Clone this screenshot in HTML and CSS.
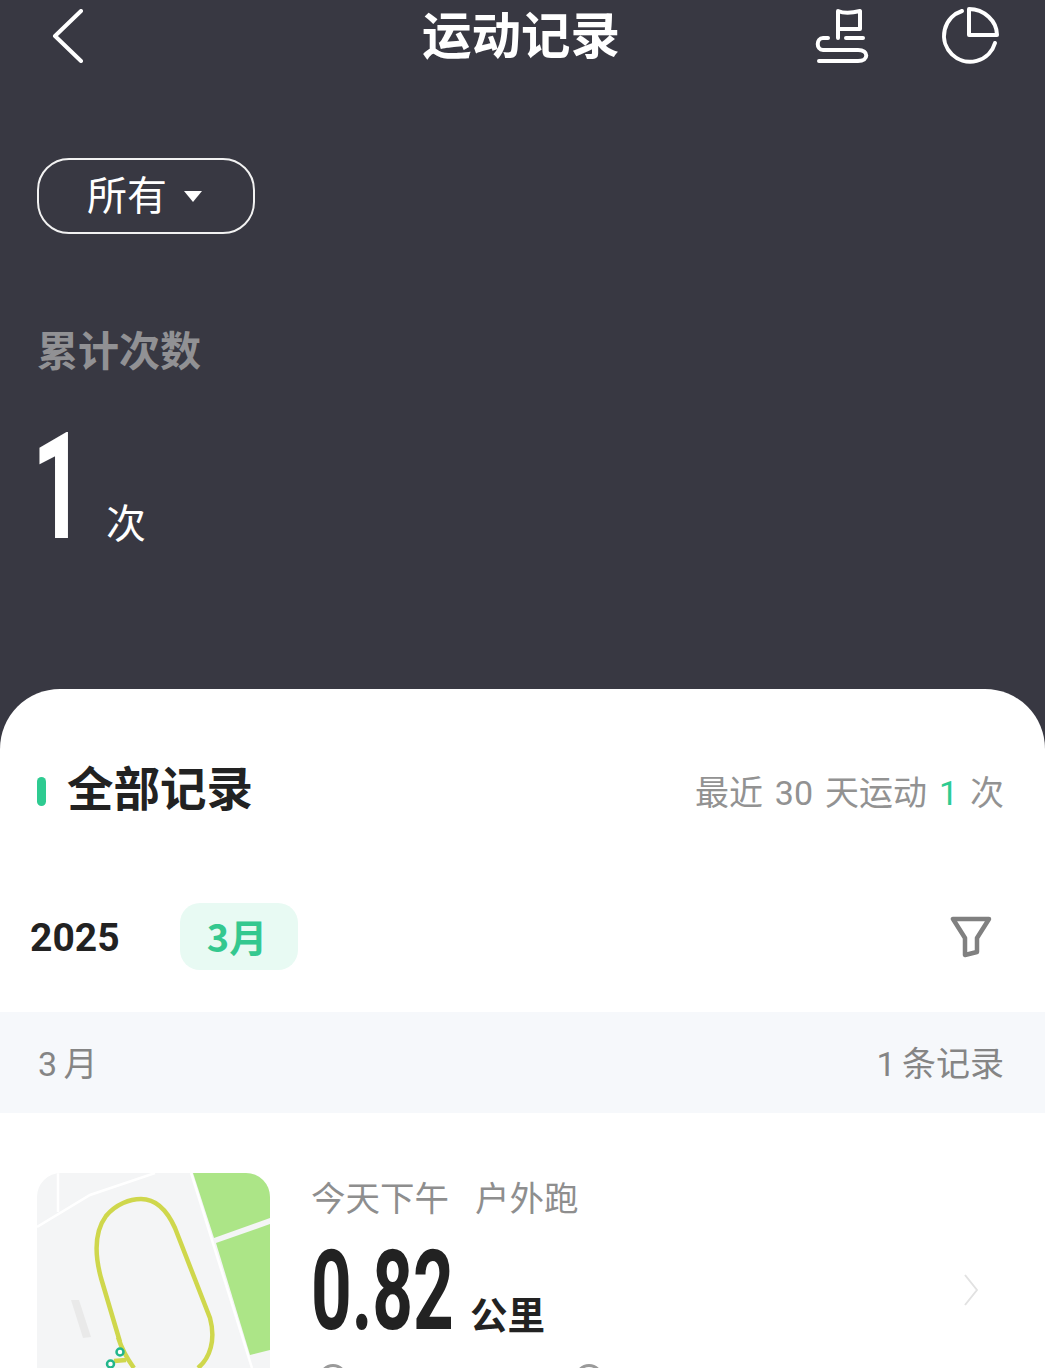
FILE: index.html
```html
<!DOCTYPE html>
<html lang="zh-CN">
<head>
<meta charset="utf-8">
<title>运动记录</title>
<link rel="stylesheet" href="styles.css">
</head>
<body>
<div class="page">
  <header class="hero">
    <nav class="nav">
      <svg class="nav-back" viewBox="0 0 32 54" width="32" height="54"><path d="M29 2 L3 27 L29 52" fill="none" stroke="#fff" stroke-width="4" stroke-linecap="round" stroke-linejoin="round"/></svg>
      <h1 class="nav-title">运动记录</h1>
      <div class="nav-icons">
        <svg class="flag-icon" width="60" height="60" viewBox="0 0 60 60"><g fill="none" stroke="#fff" stroke-width="4" stroke-linecap="round" stroke-linejoin="round"><path d="M26 31 V4 C33 7 40 6 48 4 V22 H26"/><path d="M34 31 H51"/><path d="M16 31 H11 C4 31 4 43 11 43 H46 C57 43 57 54 46 54 H7"/></g></svg>
        <svg width="60" height="60" viewBox="0 0 60 60"><g fill="none" stroke="#fff" stroke-width="4" stroke-linecap="round" stroke-linejoin="round"><path d="M22 6 A26 26 0 1 0 55 38"/><path d="M29 4 C44 4 57 16 57 30 H29 Z"/></g></svg>
      </div>
    </nav>
    <button class="filter">所有<span class="caret"></span></button>
    <div class="total-label">累计次数</div>
    <div class="total">
      <span class="total-num">1</span>
      <span class="total-unit">次</span>
    </div>
  </header>
  <main class="sheet">
    <div class="sheet-head">
      <div class="head-left"><span class="accent"></span><h2 class="head-title">全部记录</h2></div>
      <div class="head-right">最近 30 天运动 <span class="green">1</span> 次</div>
    </div>
    <div class="months">
      <span class="year">2025</span>
      <span class="chip">3月</span>
      <svg class="funnel" width="42" height="42" viewBox="0 0 42 42"><path d="M3 3 H39 L27 22 V36 L15 39 V22 Z" fill="none" stroke="#808080" stroke-width="4.500" stroke-linejoin="round"/></svg>
    </div>
    <div class="band"><span>3 月</span><span>1 条记录</span></div>
    <article class="record">
      <svg class="map" viewBox="37 1173 233 233" width="233" height="233">
        <rect x="37" y="1173" width="233" height="233" fill="#f4f5f6"/>
        <path d="M193 1173 H270 V1218 L214 1238 Z" fill="#ace587"/>
        <path d="M216 1243 L270 1224 V1350 L250 1355 Z" fill="#ace587"/>
        <g fill="none" stroke="#fff" stroke-width="2.500">
          <path d="M37 1227 L90 1195 L155 1173"/>
          <path d="M58 1173 V1212"/>
          <path d="M191 1173 L252 1368"/>
        </g>
        <path d="M71 1300 L79 1300 L91 1337 L83 1338 Z" fill="#e9e9e9"/>
        <path d="M120 1342 L101 1278 C94 1252 95 1231 106 1216 C116 1204 130 1199 141 1199 C155 1199 166 1208 175 1228 L210 1318 C216 1340 210 1358 198 1368 M118 1337 C122 1350 128 1360 134 1368 M114 1361 L126 1360" fill="none" stroke="#cfd74c" stroke-width="4.500" stroke-linejoin="round"/>
        <circle cx="120" cy="1352" r="3.500" fill="#fff" stroke="#22b68c" stroke-width="2.500"/>
        <circle cx="110.500" cy="1364" r="3.500" fill="#fff" stroke="#22b68c" stroke-width="2.500"/>
      </svg>
      <div class="record-body">
        <div class="record-meta"><span>今天下午</span><span>户外跑</span></div>
        <div class="record-dist"><span class="dist-box"><span class="dist-num">0.82</span></span><span class="dist-unit">公里</span></div>
        <div class="record-stats"><span class="stat-dot"></span><span class="stat-dot"></span></div>
      </div>
      <svg class="chevron" width="16" height="34" viewBox="0 0 16 34"><path d="M2 2 L14 17 L2 32" fill="none" stroke="#e2e2e2" stroke-width="2" stroke-linejoin="round"/></svg>
    </article>
  </main>
</div>
</body>
</html>
```

FILE: styles.css
```css
* { box-sizing: border-box; }
html, body { margin: 0; padding: 0; }
body {
  background: #383842;
  font-family: "Noto Sans CJK SC", "Roboto", sans-serif;
}
.page {
  width: 1045px;
  height: 1368px;
  overflow: hidden;
  background: #383842;
}
.hero {
  height: 689px;
  padding: 0 37px;
  color: #fff;
}
.nav {
  height: 72px;
  display: flex;
  align-items: center;
  justify-content: space-between;
  position: relative;
}
.nav-back { margin-left: 15px; }
.nav-title {
  position: absolute;
  left: 385px;
  top: 0;
  margin: 0;
  font-size: 49.500px;
  line-height: 65px;
  font-weight: 700;
  color: #fff;
}
.nav-icons {
  display: flex;
  align-items: center;
  gap: 68px;
  margin-right: 8px;
  margin-bottom: 2px;
}
.flag-icon { margin-top: 4px; }
.filter {
  margin-top: 86px;
  width: 218px;
  height: 76px;
  display: flex;
  align-items: center;
  padding: 0 0 7px 48px;
  border: 2px solid #f2f2f2;
  border-radius: 32px;
  background: transparent;
  color: #fff;
  font-family: inherit;
  font-size: 40px;
  line-height: 1;
}
.caret {
  margin-left: 17px;
  margin-top: 7px;
  width: 0;
  height: 0;
  border-left: 9px solid transparent;
  border-right: 9px solid transparent;
  border-top: 11px solid #fff;
}
.total-label {
  margin-top: 85px;
  font-size: 41px;
  line-height: 58px;
  font-weight: 700;
  color: #919194;
}
.total {
  margin-top: 46px;
  display: flex;
  align-items: flex-end;
  height: 130px;
}
.total-num {
  display: block;
  width: 70px;
  font-family: "Roboto", sans-serif;
  font-size: 148px;
  font-weight: 700;
  line-height: 130px;
  transform: scaleX(0.62);
  transform-origin: left bottom;
  margin-left: -5px;
}
.total-unit {
  font-size: 40px;
  line-height: 50px;
  margin-left: 4px;
  margin-bottom: 7px;
}
.sheet {
  height: 679px;
  background: #fff;
  border-radius: 60px 60px 0 0;
}
.sheet-head {
  display: flex;
  align-items: center;
  justify-content: space-between;
  padding: 68px 41px 0 37px;
  height: 136px;
}
.head-left { display: flex; align-items: center; gap: 21px; }
.accent {
  width: 9px;
  height: 29px;
  border-radius: 5px;
  background: #2ecb91;
}
.head-title {
  margin: 0 0 10px;
  font-size: 46.500px;
  line-height: 64px;
  font-weight: 700;
  color: #222;
}
.head-right {
  margin-top: 4px;
  font-family: "Roboto", "Noto Sans CJK SC", sans-serif;
  font-size: 34px;
  line-height: 48px;
  font-weight: 400;
  word-spacing: 3.500px;
  color: #929292;
}
.green { color: #2ecb91; }
.months {
  display: flex;
  align-items: center;
  height: 67px;
  margin-top: 78px;
  padding: 0 53px 0 30px;
}
.year {
  width: 150px;
  padding-top: 2px;
  font-family: "Roboto", sans-serif;
  font-size: 39px;
  font-weight: 700;
  color: #222;
}
.chip {
  width: 118px;
  height: 67px;
  padding-right: 4px;
  border-radius: 20px;
  background: #e8faf3;
  color: #34c88f;
  font-size: 38px;
  font-weight: 700;
  line-height: 65px;
  text-align: center;
}
.funnel { margin-left: auto; }
.band {
  margin-top: 42px;
  height: 101px;
  padding: 0 41px 2px 38px;
  display: flex;
  align-items: center;
  justify-content: space-between;
  background: #f6f8fb;
  font-family: "Roboto", "Noto Sans CJK SC", sans-serif;
  font-size: 34px;
  font-weight: 400;
  word-spacing: -2px;
  color: #858585;
}
.record {
  display: flex;
  padding: 60px 66px 0 37px;
  position: relative;
}
.map {
  flex: none;
  border-radius: 24px;
}
.record-body {
  margin-left: 41px;
  flex: 1;
}
.record-meta {
  display: flex;
  gap: 26px;
  margin-top: -2px;
  font-size: 34.500px;
  line-height: 50px;
  font-weight: 400;
  color: #8e8e8e;
}
.record-dist {
  display: flex;
  align-items: flex-end;
  height: 100px;
  margin-top: 20px;
}
.dist-box {
  display: block;
  width: 159px;
  height: 100px;
}
.dist-num {
  display: block;
  font-family: "Roboto", sans-serif;
  font-size: 111px;
  font-weight: 700;
  line-height: 100px;
  color: #222;
  transform: scaleX(0.64);
  transform-origin: left center;
  white-space: nowrap;
}
.dist-unit {
  font-size: 37.500px;
  font-weight: 700;
  line-height: 50px;
  color: #222;
  margin-bottom: 3px;
}
.record-stats {
  display: flex;
  gap: 228px;
  margin-top: 23px;
  padding-left: 8px;
}
.stat-dot {
  width: 28px;
  height: 28px;
  border: 3px solid #9a9a9a;
  border-radius: 50%;
}
.chevron {
  align-self: flex-start;
  margin-top: 100px;
}
```
